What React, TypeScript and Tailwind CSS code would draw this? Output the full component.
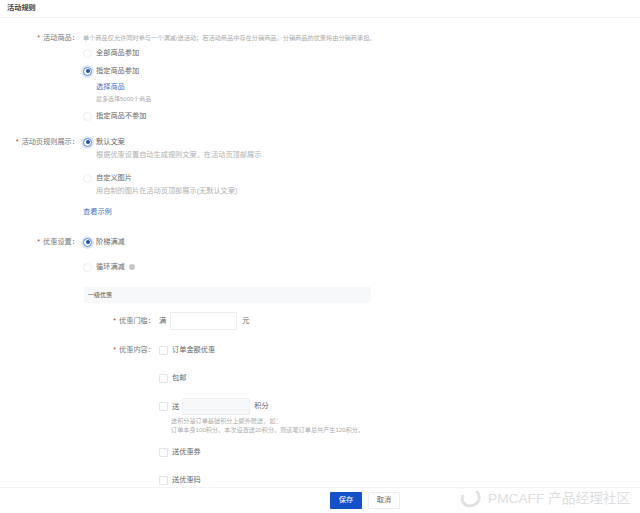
const font = { fontFamily: '"Liberation Sans", "Noto Sans CJK SC", sans-serif' };

function Radio({ checked, label }: { checked?: boolean; label: string }) {
  return (
    <div className="flex h-[14px] items-center">
      {checked ? (
        <span className="flex h-[9px] w-[9px] items-center justify-center rounded-full border border-[#5b84dc] bg-white shadow-[0_0_0_2px_#dfe8fa]">
          <span className="h-[4px] w-[4px] rounded-full bg-[#1d4fb8]" />
        </span>
      ) : (
        <span className="h-[9px] w-[9px] rounded-full border border-[#eeeeee] bg-white" />
      )}
      <span className="ml-[4px] text-[7.2px] leading-[14px] text-[#666]">{label}</span>
    </div>
  );
}

function Check({ label }: { label: string }) {
  return (
    <div className="flex h-[14px] items-center">
      <span className="h-[9px] w-[9px] rounded-[1px] border border-[#e4e4e4] bg-white" />
      <span className="ml-[4px] text-[7.2px] leading-[14px] text-[#666]">{label}</span>
    </div>
  );
}

function Label({ text, width }: { text: string; width: string }) {
  return (
    <div className={`${width} flex h-[14px] shrink-0 justify-end text-[7.2px] leading-[14px] text-[#777]`}>
      <span className="mr-[3px] text-[#d0342c]">*</span>
      {text + "\uFF1A"}
    </div>
  );
}

export default function App() {
  return (
    <div className="flex h-[513px] w-[640px] flex-col overflow-hidden bg-white" style={font}>
      <div className="h-[18px] shrink-0 border-b border-[#f2f2f2] pl-[7px] text-[7.2px] leading-[15px] font-bold text-[#444]">
        活动规则
      </div>

      <div className="flex-1 overflow-hidden">
        {/* 活动商品 */}
        <div className="mt-[13px] flex">
          <Label text="活动商品" width="w-[79px]" />
          <div className="ml-[2px]">
            <div className="h-[15px] pl-[2px] text-[6.2px] leading-[14px] whitespace-nowrap text-[#aaa]">
              {"单个商品仅允许同时参与一个满减/送活动\uFF1B若活动商品中存在分销商品\uFF0C分销商品的优惠将由分销商承担。"}
            </div>
            <div className="pl-[2px]">
              <Radio label="全部商品参加" />
              <div className="mt-[4px]">
                <Radio checked label="指定商品参加" />
              </div>
              <div className="mt-[2px] pl-[13px] text-[7.2px] leading-[14px] text-[#3f6fce]">选择商品</div>
              <div className="pl-[13px] text-[6px] leading-[10px] text-[#aaa]">最多选择5000个商品</div>
              <div className="mt-[5px]">
                <Radio label="指定商品不参加" />
              </div>
            </div>
          </div>
        </div>

        {/* 活动页规则展示 */}
        <div className="mt-[12px] flex">
          <Label text="活动页规则展示" width="w-[79px]" />
          <div className="ml-[4px]">
            <Radio checked label="默认文案" />
            <div className="pl-[13px] text-[7.2px] leading-[12px] text-[#b0b0b0]">
              根据优惠设置自动生成规则文案。在活动页顶部展示
            </div>
            <div className="mt-[10px]">
              <Radio label="自定义图片" />
            </div>
            <div className="pl-[13px] text-[7.2px] leading-[12px] text-[#b0b0b0]">
              用自制的图片在活动页顶部展示(无默认文案)
            </div>
            <div className="mt-[8px] text-[7.2px] leading-[14px] text-[#3f6fce]">查看示例</div>
          </div>
        </div>

        {/* 优惠设置 */}
        <div className="mt-[16px] flex">
          <Label text="优惠设置" width="w-[79px]" />
          <div className="ml-[4px]">
            <Radio checked label="阶梯满减" />
            <div className="mt-[11px] flex items-center">
              <Radio label="循环满减" />
              <span className="ml-[4px] h-[6px] w-[6px] rounded-full bg-[#c8c8c8]" />
            </div>
          </div>
        </div>

        <div className="mt-[13px] ml-[84px] h-[16px] w-[287px] bg-[#f7f8fa] pl-[4px] text-[6px] leading-[16px] text-[#555]">
          一级优惠
        </div>

        {/* 优惠门槛 */}
        <div className="mt-[9px] flex items-center">
          <Label text="优惠门槛" width="w-[155px]" />
          <span className="ml-[4px] text-[7.2px] text-[#666]">满</span>
          <div className="ml-[4px] h-[18px] w-[67px] rounded-[1px] border border-[#eee] bg-white" />
          <span className="ml-[5px] text-[7.2px] text-[#666]">元</span>
        </div>

        {/* 优惠内容 */}
        <div className="mt-[13px] flex">
          <Label text="优惠内容" width="w-[155px]" />
          <div className="ml-[4px]">
            <Check label="订单金额优惠" />
            <div className="mt-[14px]">
              <Check label="包邮" />
            </div>
            <div className="mt-[12px] flex h-[19px] items-center">
              <Check label="送" />
              <div className="ml-[3px] h-[17px] w-[68px] rounded-[1px] border border-[#eee] bg-[#f7f8f9]" />
              <span className="ml-[4px] text-[7.2px] text-[#666]">积分</span>
            </div>
            <div className="pl-[12px] text-[6.15px] leading-[9px] whitespace-nowrap text-[#aaa]">
              {"送积分是订单基础积分上额外赠送\uFF0C如\uFF1A"}
              <br />
              {"订单本身100积分\uFF0C本次设置送20积分\uFF0C则该笔订单总共产生120积分。"}
            </div>
            <div className="mt-[11px]">
              <Check label="送优惠券" />
            </div>
            <div className="mt-[14px]">
              <Check label="送优惠码" />
            </div>
          </div>
        </div>
      </div>

      {/* footer */}
      <div className="relative flex h-[26px] shrink-0 items-center gap-[6px] border-t border-[#f4f4f4] bg-white pl-[330px]">
        <button className="h-[17px] w-[32px] rounded-[1px] bg-[#1450c8] text-[7.2px] text-white">保存</button>
        <button className="h-[17px] w-[32px] rounded-[1px] border border-[#eee] bg-white text-[7.2px] text-[#666]">取消</button>
        <div className="absolute top-[1px] left-[460px] flex h-[20px] items-center gap-[6px] text-[13.7px] whitespace-nowrap text-[#dedede]">
          <svg width="22" height="19" viewBox="0 0 22 19" fill="none">
            <path d="M17 2c3 3 3 8 0 11s-9 4-12 1.500S2 8 2.500 6" stroke="#e2e2e2" strokeWidth="3" strokeLinecap="round" />
          </svg>
          <span>PMCAFF 产品经理社区</span>
        </div>
      </div>
    </div>
  );
}
